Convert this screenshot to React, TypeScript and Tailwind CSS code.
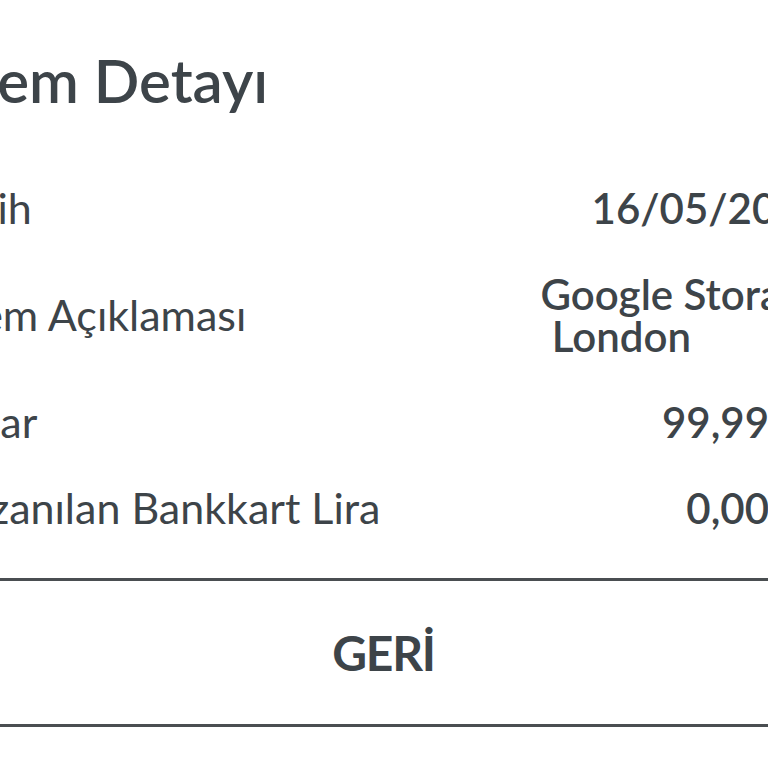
const rows: { label: string; value: string[] }[] = [
  { label: "Tarih", value: ["16/05/2020"] },
  { label: "İşlem Açıklaması", value: ["Google Storage", "London"] },
  { label: "Tutar", value: ["99,99 TL"] },
  { label: "Kazanılan Bankkart Lira", value: ["0,00 TL"] },
];

export default function App() {
  return (
    <div
      className="h-[768px] w-[768px] overflow-hidden bg-white text-[#3d4449]"
      style={{ fontFamily: "Lato, 'Noto Sans', sans-serif" }}
    >
      <div className="-ml-[60px] w-[887px] pt-[44px]">
        <h1 className="text-[60px] font-semibold leading-[72px] whitespace-nowrap">
          İşlem Detayı
        </h1>
        <dl className="mt-[71px] flex flex-col gap-[44px] pr-[2px]">
          {rows.map((row) => (
            <div key={row.label} className="flex items-center justify-between">
              <dt className="text-[43px] leading-[42px] whitespace-nowrap">
                {row.label}
              </dt>
              <dd className="flex flex-col items-end text-[42px] font-semibold leading-[42px] whitespace-nowrap">
                {row.value.map((line, i) => (
                  <span key={line} className={i === 1 ? "mr-[134px]" : ""}>
                    {line}
                  </span>
                ))}
              </dd>
            </div>
          ))}
        </dl>
        <button
          type="button"
          className="mt-[49px] flex h-[149px] w-full items-center justify-center border-y-[3px] border-[#4a4e51] text-[48px] font-bold tracking-tight"
        >
          GERİ
        </button>
      </div>
    </div>
  );
}
